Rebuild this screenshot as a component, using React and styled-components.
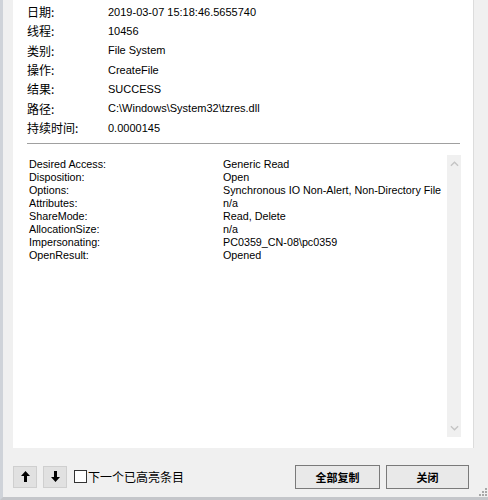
import styled, { createGlobalStyle } from "styled-components";

const GlobalStyle = createGlobalStyle`
  html, body {
    margin: 0;
    padding: 0;
    background: #f0f0f0;
  }
  #root {
    height: 500px;
  }
`;

const info = [
  ["日期:", "2019-03-07 15:18:46.5655740"],
  ["线程:", "10456"],
  ["类别:", "File System"],
  ["操作:", "CreateFile"],
  ["结果:", "SUCCESS"],
  ["路径:", "C:\\Windows\\System32\\tzres.dll"],
  ["持续时间:", "0.0000145"],
];

const details = [
  ["Desired Access:", "Generic Read"],
  ["Disposition:", "Open"],
  ["Options:", "Synchronous IO Non-Alert, Non-Directory File"],
  ["Attributes:", "n/a"],
  ["ShareMode:", "Read, Delete"],
  ["AllocationSize:", "n/a"],
  ["Impersonating:", "PC0359_CN-08\\pc0359"],
  ["OpenResult:", "Opened"],
];

const App = () => {
  return (
    <Window>
      <GlobalStyle />
      <Panel>
        <InfoGrid>
          {info.map(([k, v]) => (
            <InfoRow key={k}>
              <InfoLabel>{k}</InfoLabel>
              <InfoValue>{v}</InfoValue>
            </InfoRow>
          ))}
        </InfoGrid>
        <Divider />
        <DetailBox>
          <DetailText>
            {details.map(([k, v]) => (
              <DetailRow key={k}>
                <span>{k}</span>
                <span>{v}</span>
              </DetailRow>
            ))}
          </DetailText>
          <ScrollBar>
            <Chevron viewBox="0 0 10 6">
              <path d="M1 5 L5 1 L9 5" />
            </Chevron>
            <Chevron viewBox="0 0 10 6">
              <path d="M1 1 L5 5 L9 1" />
            </Chevron>
          </ScrollBar>
        </DetailBox>
      </Panel>
      <Footer>
        <NavButton>
          <svg width="9" height="11" viewBox="0 0 9 11">
            <path d="M4.5 0 L9 5 L6 5 L6 11 L3 11 L3 5 L0 5 Z" fill="#000" />
          </svg>
        </NavButton>
        <NavButton>
          <svg width="9" height="11" viewBox="0 0 9 11">
            <path d="M4.5 11 L9 6 L6 6 L6 0 L3 0 L3 6 L0 6 Z" fill="#000" />
          </svg>
        </NavButton>
        <CheckLabel>
          <CheckBox />
          下一个已高亮条目
        </CheckLabel>
        <Spacer />
        <ActionButton $w={85}>全部复制</ActionButton>
        <ActionButton $w={83}>关闭</ActionButton>
        <Grip viewBox="0 0 8 8">
          {[
            [6, 0],
            [6, 3],
            [3, 3],
            [6, 6],
            [3, 6],
            [0, 6],
          ].map(([x, y]) => (
            <rect key={`${x}-${y}`} x={x} y={y} width="2" height="2" fill="#a8a8a8" />
          ))}
        </Grip>
      </Footer>
    </Window>
  );
};

export default App;

const Window = styled.div`
  position: relative;
  height: 500px;
  box-sizing: border-box;
  display: flex;
  flex-direction: column;
  background: #f0f0f0;
  border-left: 3px solid #cfd3d9;
  border-bottom: 3px solid #c4c6ca;
  font-family: "Noto Sans CJK SC", "Liberation Sans", sans-serif;
  color: #000;
`;

const Panel = styled.div`
  margin: 0 14px 0 10px;
  height: 448px;
  background: #fff;
  box-sizing: border-box;
  padding: 2px 14px 0 14px;
  display: flex;
  flex-direction: column;
  border-right: 1px solid #dcdcdc;
`;

const InfoGrid = styled.div`
  display: flex;
  flex-direction: column;
`;

const InfoRow = styled.div`
  display: grid;
  grid-template-columns: 81px 1fr;
  height: 19.33px;
  align-items: center;
  font-size: 12px;
`;

const InfoLabel = styled.span`
  font-family: "Noto Sans CJK SC", sans-serif;
  font-size: 12px;
`;

const InfoValue = styled.span`
  font-family: "Liberation Sans", "Noto Sans CJK SC", sans-serif;
  font-size: 11px;
  white-space: nowrap;
`;

const Divider = styled.div`
  margin-top: 6px;
  height: 1px;
  background: #a0a0a0;
  width: 433px;
`;

const DetailBox = styled.div`
  margin-top: 11px;
  height: 282px;
  display: flex;
  margin-right: -2px;
`;

const DetailText = styled.div`
  flex: 1;
  padding: 2px 0 0 2px;
  font-family: "Liberation Sans", sans-serif;
  font-size: 10.75px;
`;

const DetailRow = styled.div`
  display: grid;
  grid-template-columns: 194px 1fr;
  height: 13px;
  line-height: 14px;
  white-space: nowrap;
`;

const ScrollBar = styled.div`
  width: 14px;
  background: #f0f0f0;
  display: flex;
  flex-direction: column;
  justify-content: space-between;
  align-items: center;
  padding: 6px 0 6px;
  box-sizing: border-box;
`;

const Chevron = styled.svg`
  width: 9px;
  height: 6px;
  fill: none;
  stroke: #c4c4c4;
  stroke-width: 1.5;
`;

const Footer = styled.div`
  flex: 1;
  display: flex;
  align-items: center;
  padding: 8px 19px 0 10px;
  gap: 6px;
`;

const NavButton = styled.button`
  width: 24px;
  height: 22px;
  padding: 0;
  display: flex;
  align-items: center;
  justify-content: center;
  background: #e1e1e1;
  border: 1px solid #cfcfcf;
`;

const CheckLabel = styled.label`
  display: flex;
  align-items: center;
  font-size: 12px;
  font-family: "Noto Sans CJK SC", sans-serif;
  margin-left: 1px;
`;

const CheckBox = styled.span`
  width: 11px;
  height: 11px;
  border: 1px solid #333;
  background: #fff;
  margin-right: 1px;
`;

const Spacer = styled.div`
  flex: 1;
`;

const ActionButton = styled.button`
  width: ${(p) => p.$w}px;
  height: 24px;
  padding: 0;
  background: #e9e9e9;
  border: 1px solid #7a7a7a;
  font-family: "Noto Sans CJK SC", sans-serif;
  font-weight: 700;
  font-size: 11px;
  color: #000;
`;

const Grip = styled.svg`
  position: absolute;
  right: 1px;
  bottom: 1px;
  width: 8px;
  height: 8px;
`;
